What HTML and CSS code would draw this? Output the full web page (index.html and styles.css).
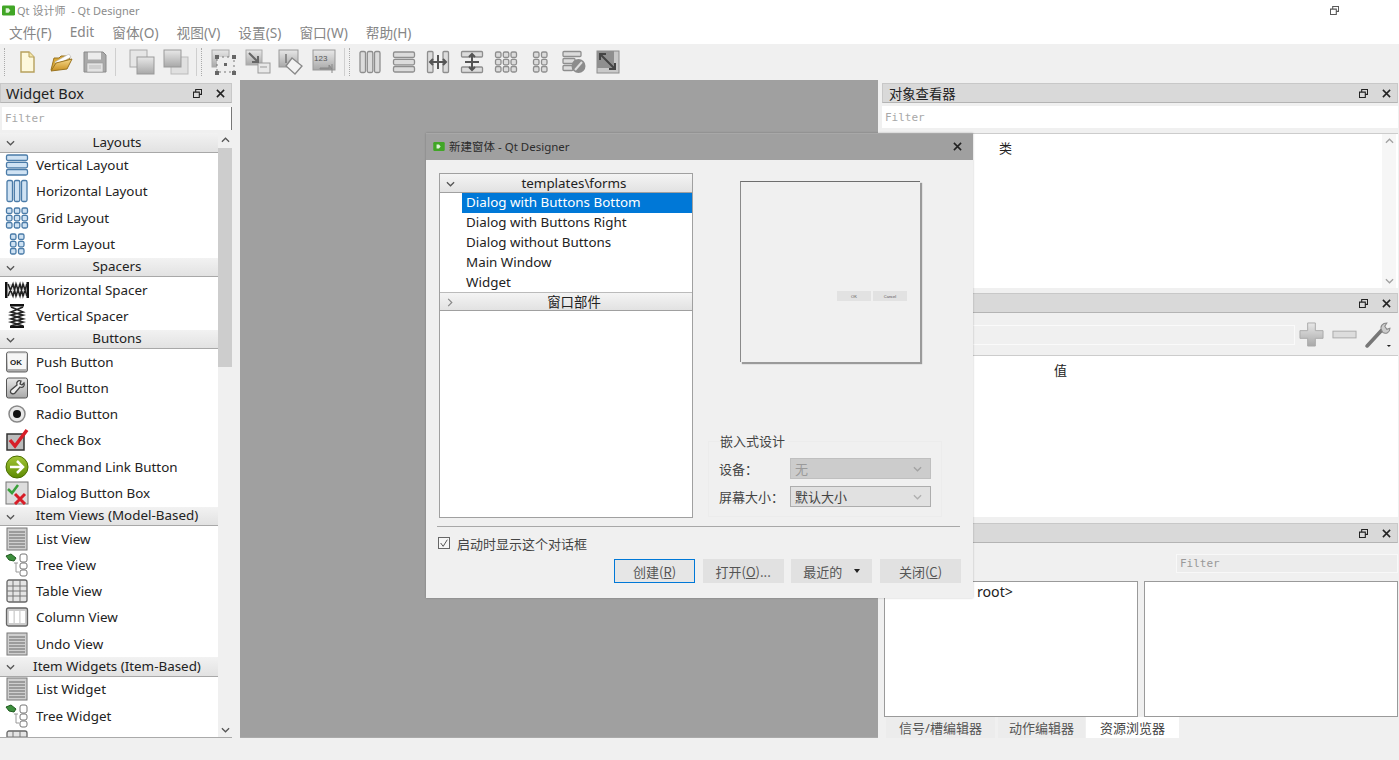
FILE: index.html
```html
<!DOCTYPE html>
<html lang="zh">
<head>
<meta charset="utf-8">
<title>Qt Designer</title>
<link rel="stylesheet" href="styles.css">
</head>
<body>
<svg class="sprite" xmlns="http://www.w3.org/2000/svg">
  <defs>
    <linearGradient id="gOrange" x1="0" y1="0" x2="0" y2="1"><stop offset="0" stop-color="#f6d98a"/><stop offset="1" stop-color="#c98f1e"/></linearGradient>
    <linearGradient id="gGray" x1="0" y1="0" x2="0" y2="1"><stop offset="0" stop-color="#e8e8e8"/><stop offset="1" stop-color="#a8a8a8"/></linearGradient>
    <linearGradient id="gGreen" x1="0" y1="0" x2="0" y2="1"><stop offset="0" stop-color="#a4c639"/><stop offset="1" stop-color="#5c8a00"/></linearGradient>
  </defs>
  <symbol id="i-new" viewBox="0 0 24 24"><path d="M6 2h8l5 5v15H6z" fill="#fdf8dc" stroke="#b6a05c" stroke-width="1.4"/><path d="M14 2v5h5" fill="#f3e6a8" stroke="#b6a05c"/></symbol>
  <symbol id="i-open" viewBox="0 0 24 24"><path d="M2 20 5 8h5l2-2h9l-1 6z" fill="#d8a93c" stroke="#9a7420"/><path d="M6 12 20 4l2 3-14 8z" fill="#fff" stroke="#bbb" stroke-width=".6"/><path d="M2 21 7 13 23 9l-5 10z" fill="url(#gOrange)" stroke="#9a7420"/></symbol>
  <symbol id="i-save" viewBox="0 0 24 24"><path d="M1 2h19l3 3v17H1z" fill="#a9a9a9" stroke="#8a8a8a"/><rect x="5" y="2.500" width="13" height="7" fill="#ececec"/><rect x="4" y="13" width="16" height="9" fill="#e3e3e3" stroke="#999" stroke-width=".6"/><path d="M6 16h12M6 18h12" stroke="#bbb"/></symbol>
  <symbol id="i-front" viewBox="0 0 26 26"><rect x="1" y="1" width="17" height="17" fill="#e6e6e6" stroke="#aaa"/><rect x="8" y="8" width="17" height="17" fill="url(#gGray)" stroke="#999"/></symbol>
  <symbol id="i-back" viewBox="0 0 26 26"><rect x="8" y="8" width="17" height="17" fill="#e0e0e0" stroke="#bbb"/><rect x="1" y="1" width="17" height="17" fill="url(#gGray)" stroke="#999"/></symbol>
  <symbol id="i-edit" viewBox="0 0 26 26"><rect x="1" y="1" width="17" height="17" fill="url(#gGray)" stroke="#aaa"/><rect x="6" y="8" width="17" height="15" fill="#eee" stroke="#777" stroke-dasharray="2 3"/><g fill="#666"><rect x="4" y="6" width="4" height="4"/><rect x="21" y="6" width="4" height="4"/><rect x="4" y="22" width="4" height="4"/><rect x="21" y="22" width="4" height="4"/><rect x="13" y="14" width="3" height="3"/></g></symbol>
  <symbol id="i-signal" viewBox="0 0 26 26"><rect x="1" y="1" width="16" height="15" fill="url(#gGray)" stroke="#aaa"/><rect x="13" y="14" width="12" height="10" fill="#e8e8e8" stroke="#999"/><path d="M15 18h7" stroke="#999"/><path d="M4 4 13 13M13 7v6H7" fill="none" stroke="#666" stroke-width="2"/></symbol>
  <symbol id="i-buddy" viewBox="0 0 26 26"><rect x="1" y="1" width="19" height="17" fill="url(#gGray)" stroke="#999"/><path d="M14 9 24 17 17 25 8 17z" fill="#f2f2f2" stroke="#888" stroke-width="1.300"/><path d="M8 5v9" stroke="#777" stroke-width="1.500"/></symbol>
  <symbol id="i-tab" viewBox="0 0 26 26"><rect x="1" y="1" width="22" height="20" fill="url(#gGray)" stroke="#999"/><path d="M8 20h12l-3-4v3h-9zM20 15v9" fill="#999" stroke="#888"/></symbol>
  <symbol id="i-h" viewBox="0 0 24 24"><g class="lay"><rect x="2" y="1.500" width="5.500" height="21" rx="1.500"/><rect x="9.300" y="1.500" width="5.500" height="21" rx="1.500"/><rect x="16.500" y="1.500" width="5.500" height="21" rx="1.500"/></g></symbol>
  <symbol id="i-v" viewBox="0 0 24 24"><g class="lay"><rect x="1.500" y="2" width="21" height="5.500" rx="1.500"/><rect x="1.500" y="9.300" width="21" height="5.500" rx="1.500"/><rect x="1.500" y="16.500" width="21" height="5.500" rx="1.500"/></g></symbol>
  <symbol id="i-sh" viewBox="0 0 24 24"><g class="lay"><rect x="1.500" y="1.500" width="5.500" height="21" rx="1"/><rect x="17" y="1.500" width="5.500" height="21" rx="1"/></g><path d="M4 12h16M7 9l-3 3 3 3M17 9l3 3-3 3M12 5v14" fill="none" stroke="#555" stroke-width="2"/></symbol>
  <symbol id="i-sv" viewBox="0 0 24 24"><g class="lay"><rect x="1.500" y="1.500" width="21" height="5.500" rx="1"/><rect x="1.500" y="17" width="21" height="5.500" rx="1"/></g><path d="M12 4v16M9 7l3-3 3 3M9 17l3 3 3-3M5 12h14" fill="none" stroke="#555" stroke-width="2"/></symbol>
  <symbol id="i-grid" viewBox="0 0 24 24"><g class="lay"><rect x="1.500" y="2" width="5.500" height="5.500" rx="1.500"/><rect x="9.300" y="2" width="5.500" height="5.500" rx="1.500"/><rect x="17" y="2" width="5.500" height="5.500" rx="1.500"/><rect x="1.500" y="9.300" width="5.500" height="5.500" rx="1.500"/><rect x="9.300" y="9.300" width="5.500" height="5.500" rx="1.500"/><rect x="17" y="9.300" width="5.500" height="5.500" rx="1.500"/><rect x="1.500" y="16.500" width="5.500" height="5.500" rx="1.500"/><rect x="9.300" y="16.500" width="5.500" height="5.500" rx="1.500"/><rect x="17" y="16.500" width="5.500" height="5.500" rx="1.500"/></g></symbol>
  <symbol id="i-form" viewBox="0 0 24 24"><g class="lay"><rect x="5.500" y="2" width="5.500" height="5.500" rx="1.500"/><rect x="13.500" y="2" width="5.500" height="5.500" rx="1.500"/><rect x="5.500" y="9.300" width="5.500" height="5.500" rx="1.500"/><rect x="13.500" y="9.300" width="5.500" height="5.500" rx="1.500"/><rect x="5.500" y="16.500" width="5.500" height="5.500" rx="1.500"/><rect x="13.500" y="16.500" width="5.500" height="5.500" rx="1.500"/></g></symbol>
  <symbol id="i-break" viewBox="0 0 24 24"><g class="lay"><rect x="1" y="1.500" width="18" height="5" rx="1"/><rect x="1" y="8.500" width="12" height="5" rx="1"/><rect x="1" y="15.500" width="10" height="5" rx="1"/></g><circle cx="16.500" cy="16" r="7" fill="#8c8c8c"/><path d="M13 20 20 12" stroke="#ddd" stroke-width="2"/></symbol>
  <symbol id="i-adjust" viewBox="0 0 24 24"><rect x="1" y="1" width="22" height="22" fill="#c9c9c9" stroke="#8c8c8c"/><rect x="1" y="1" width="17" height="17" fill="#8f8f8f"/><path d="M4 4 19 19M4 10V4h6M19 13v6h-6" fill="none" stroke="#444" stroke-width="2"/></symbol>
  <symbol id="i-hspacer" viewBox="0 0 24 24"><path d="M1 4v16M23 4v16" stroke="#111" stroke-width="3"/><path d="M3 6h18v12H3z" fill="#ddd"/><path d="M3 18 8 6l3 12 4-12 3 12 4-12M3 6l5 12 3-12 4 12 3-12 4 12" fill="none" stroke="#222" stroke-width="1.500"/></symbol>
  <symbol id="i-vspacer" viewBox="0 0 24 24"><path d="M5 1h14M5 23h14" stroke="#111" stroke-width="3"/><path d="M6 3 18 8 6 11l12 4-12 3 12 4M18 3 6 8l12 3-12 4 12 3-12 4" fill="none" stroke="#222" stroke-width="1.700"/></symbol>
  <symbol id="i-push" viewBox="0 0 24 24"><rect x="1.500" y="2" width="21" height="20" rx="2" fill="url(#gGray)" stroke="#666"/><rect x="3" y="4" width="18" height="15" fill="#f6f6f6"/></symbol>
  <symbol id="i-tool" viewBox="0 0 24 24"><rect x="1.500" y="2" width="21" height="20" rx="2" fill="url(#gGray)" stroke="#555"/><path d="M16 5c-3-1-5 1-4 4L6 14c-2 3 2 5 4 3l5-6c3 1 5-1 4-4l-2 2-2-1z" fill="#eee" stroke="#444" stroke-width="1.300"/></symbol>
  <symbol id="i-radio" viewBox="0 0 24 24"><circle cx="12" cy="12" r="8" fill="#e8e8e8" stroke="#888" stroke-width="1.500"/><circle cx="12" cy="12" r="4" fill="#111"/></symbol>
  <symbol id="i-check" viewBox="0 0 24 24"><rect x="2" y="6" width="17" height="16" fill="#bbb" stroke="#333" stroke-width="1.500"/><path d="M5 12 10 18 22 2" fill="none" stroke="#d81e28" stroke-width="3.500"/></symbol>
  <symbol id="i-cmd" viewBox="0 0 24 24"><circle cx="12" cy="12" r="11" fill="url(#gGreen)" stroke="#4a6e00"/><path d="M5 12h12M12 6l6 6-6 6" fill="none" stroke="#fff" stroke-width="2.500"/></symbol>
  <symbol id="i-dlg" viewBox="0 0 24 24"><rect x="1" y="1" width="22" height="22" fill="#ddd" stroke="#777"/><path d="M3 8 7 12 13 4" fill="none" stroke="#3aa03a" stroke-width="2.500"/><path d="M10 13 20 23M20 13 10 23" stroke="#d81e28" stroke-width="3"/></symbol>
  <symbol id="i-list" viewBox="0 0 24 24"><rect x="2" y="1" width="20" height="22" fill="#cfcfcf" stroke="#777"/><path d="M4 5h16M4 8h16M4 11h16M4 14h16M4 17h16M4 20h16" stroke="#8a8a8a" stroke-width="1.500"/></symbol>
  <symbol id="i-tree" viewBox="0 0 24 24"><path d="M1 3 6 1l5 4-2 3-5-1z" fill="#3d8f3d" stroke="#1f5a1f"/><path d="M9 10h4M11 10v9h3" fill="none" stroke="#999"/><rect x="15" y="1" width="7" height="8" rx="2" fill="#fff" stroke="#777"/><rect x="15" y="10" width="7" height="6" rx="2" fill="#fff" stroke="#777"/><rect x="15" y="17" width="7" height="6" rx="2" fill="#fff" stroke="#777"/></symbol>
  <symbol id="i-table" viewBox="0 0 24 24"><rect x="2" y="1" width="20" height="22" rx="2" fill="#e4e4e4" stroke="#666" stroke-width="1.300"/><path d="M8 1v22M15 1v22M2 7h20M2 12h20M2 17h20" stroke="#777"/></symbol>
  <symbol id="i-col" viewBox="0 0 24 24"><rect x="1.500" y="3" width="21" height="18" rx="2" fill="#ccc" stroke="#666" stroke-width="1.300"/><rect x="4" y="6" width="4.500" height="12" fill="#fff"/><rect x="9.800" y="6" width="4.500" height="12" fill="#fff"/><rect x="15.500" y="6" width="4.500" height="12" fill="#fff"/></symbol>
  <symbol id="i-float" viewBox="0 0 10 10"><path d="M3 3V.5h6.500V6H7M.5 3.500H7V9.500H.5z" fill="none" stroke="#222" stroke-width="1.200"/></symbol>
  <symbol id="i-x" viewBox="0 0 10 10"><path d="M1 1 9 9M9 1 1 9" stroke="#222" stroke-width="1.700"/></symbol>
  <symbol id="i-down" viewBox="0 0 10 6"><path d="M1 1 5 5 9 1" fill="none" stroke="#555" stroke-width="1.400"/></symbol>
  <symbol id="i-up" viewBox="0 0 10 6"><path d="M1 5 5 1 9 5" fill="none" stroke="#555" stroke-width="1.400"/></symbol>
  <symbol id="i-right" viewBox="0 0 6 10"><path d="M1 1 5 5 1 9" fill="none" stroke="#888" stroke-width="1.300"/></symbol>
  <symbol id="i-qt" viewBox="0 0 14 11"><rect width="14" height="11" rx="1.500" fill="#41a626"/><path d="M4 3h3l2 2.500L7 8H4z" fill="#dff3d8"/></symbol>
  <symbol id="i-plus" viewBox="0 0 26 26"><path d="M9 1h8v8h8v8h-8v8H9v-8H1V9h8z" fill="url(#gGray)" stroke="#aaa"/></symbol>
  <symbol id="i-minus" viewBox="0 0 26 10"><rect x="1" y="1" width="24" height="7" fill="#ddd" stroke="#aaa"/></symbol>
  <symbol id="i-wrench" viewBox="0 0 26 26"><path d="M3 24 17 9" stroke="#777" stroke-width="3.500" stroke-linecap="round"/><path d="M17 9c-2-4 1-7 5-7l-2 3 2 3 3-1c0 4-4 6-7 4z" fill="#ccc" stroke="#888"/><path d="M22 23l4 0-2 2z" fill="#222"/></symbol>
</svg>

<header class="title-bar">
  <div class="title-left"><svg class="qt-mark"><use href="#i-qt"/></svg><span>Qt 设计师&nbsp; - Qt Designer</span></div>
  <svg class="restore"><use href="#i-float"/></svg>
</header>

<nav class="menu-bar">
  <span>文件(F)</span><span>Edit</span><span>窗体(O)</span><span>视图(V)</span><span>设置(S)</span><span>窗口(W)</span><span>帮助(H)</span>
</nav>

<div class="tool-bar">
  <i class="grip"></i>
  <div class="tool-group g-file">
    <svg class="tb"><use href="#i-new"/></svg><svg class="tb"><use href="#i-open"/></svg><svg class="tb"><use href="#i-save"/></svg>
  </div>
  <i class="sep"></i>
  <div class="tool-group g-order">
    <svg class="tb"><use href="#i-front"/></svg><svg class="tb"><use href="#i-back"/></svg>
  </div>
  <i class="sep"></i><i class="grip"></i>
  <div class="tool-group g-mode">
    <svg class="tb"><use href="#i-edit"/></svg><svg class="tb"><use href="#i-signal"/></svg><svg class="tb"><use href="#i-buddy"/></svg><svg class="tb" viewBox="0 0 26 26"><use href="#i-tab"/><text x="2" y="12" class="svg-num">123</text></svg>
  </div>
  <i class="sep"></i><i class="grip"></i>
  <div class="tool-group g-layout gray">
    <svg class="tb"><use href="#i-h"/></svg><svg class="tb"><use href="#i-v"/></svg><svg class="tb"><use href="#i-sh"/></svg><svg class="tb"><use href="#i-sv"/></svg><svg class="tb"><use href="#i-grid"/></svg><svg class="tb"><use href="#i-form"/></svg><svg class="tb"><use href="#i-break"/></svg><svg class="tb"><use href="#i-adjust"/></svg>
  </div>
</div>

<main class="workspace">
  <aside class="left-dock">
    <div class="dock-title"><span>Widget Box</span><span class="dock-btns"><svg class="db"><use href="#i-float"/></svg><svg class="db"><use href="#i-x"/></svg></span></div>
    <div class="filter filter-left">Filter</div>
    <div class="box-wrap">
      <div class="box-tree blue">
        <div class="cat"><svg class="chev"><use href="#i-down"/></svg>Layouts</div>
        <div class="item"><svg class="wi"><use href="#i-v"/></svg>Vertical Layout</div>
        <div class="item"><svg class="wi"><use href="#i-h"/></svg>Horizontal Layout</div>
        <div class="item"><svg class="wi"><use href="#i-grid"/></svg>Grid Layout</div>
        <div class="item"><svg class="wi"><use href="#i-form"/></svg>Form Layout</div>
        <div class="cat"><svg class="chev"><use href="#i-down"/></svg>Spacers</div>
        <div class="item"><svg class="wi"><use href="#i-hspacer"/></svg>Horizontal Spacer</div>
        <div class="item"><svg class="wi"><use href="#i-vspacer"/></svg>Vertical Spacer</div>
        <div class="cat"><svg class="chev"><use href="#i-down"/></svg>Buttons</div>
        <div class="item"><svg class="wi" viewBox="0 0 24 24"><use href="#i-push"/><text x="5" y="15" class="svg-ok">OK</text></svg>Push Button</div>
        <div class="item"><svg class="wi"><use href="#i-tool"/></svg>Tool Button</div>
        <div class="item"><svg class="wi"><use href="#i-radio"/></svg>Radio Button</div>
        <div class="item"><svg class="wi"><use href="#i-check"/></svg>Check Box</div>
        <div class="item"><svg class="wi"><use href="#i-cmd"/></svg>Command Link Button</div>
        <div class="item"><svg class="wi"><use href="#i-dlg"/></svg>Dialog Button Box</div>
        <div class="cat"><svg class="chev"><use href="#i-down"/></svg>Item Views (Model-Based)</div>
        <div class="item"><svg class="wi"><use href="#i-list"/></svg>List View</div>
        <div class="item"><svg class="wi"><use href="#i-tree"/></svg>Tree View</div>
        <div class="item"><svg class="wi"><use href="#i-table"/></svg>Table View</div>
        <div class="item"><svg class="wi"><use href="#i-col"/></svg>Column View</div>
        <div class="item"><svg class="wi"><use href="#i-list"/></svg>Undo View</div>
        <div class="cat"><svg class="chev"><use href="#i-down"/></svg>Item Widgets (Item-Based)</div>
        <div class="item"><svg class="wi"><use href="#i-list"/></svg>List Widget</div>
        <div class="item"><svg class="wi"><use href="#i-tree"/></svg>Tree Widget</div>
        <div class="item"><svg class="wi"><use href="#i-table"/></svg></div>
      </div>
      <div class="vscroll">
        <svg class="arrow"><use href="#i-up"/></svg>
        <div class="track"><div class="thumb"></div></div>
        <svg class="arrow"><use href="#i-down"/></svg>
      </div>
    </div>
  </aside>

  <section class="central"></section>

  <aside class="right-dock">
    <div class="dock dock-object">
      <div class="dock-title"><span class="cjk">对象查看器</span><span class="dock-btns"><svg class="db"><use href="#i-float"/></svg><svg class="db"><use href="#i-x"/></svg></span></div>
      <div class="filter filter-right">Filter</div>
      <div class="obj-table">
        <div class="table-body"><span class="head-cell class-head">类</span></div>
        <div class="vscroll light">
          <svg class="arrow"><use href="#i-up"/></svg>
          <div class="track"></div>
          <svg class="arrow"><use href="#i-down"/></svg>
        </div>
      </div>
    </div>
    <div class="dock dock-prop">
      <div class="dock-title dock-title-end"><span class="dock-btns"><svg class="db"><use href="#i-float"/></svg><svg class="db"><use href="#i-x"/></svg></span></div>
      <div class="prop-tools">
        <div class="prop-input"></div>
        <svg class="pt-plus"><use href="#i-plus"/></svg>
        <svg class="pt-minus"><use href="#i-minus"/></svg>
        <svg class="pt-wrench"><use href="#i-wrench"/></svg>
      </div>
      <div class="prop-table"><span class="head-cell value-head">值</span></div>
    </div>
    <div class="dock dock-res">
      <div class="dock-title dock-title-end"><span class="dock-btns"><svg class="db"><use href="#i-float"/></svg><svg class="db"><use href="#i-x"/></svg></span></div>
      <div class="res-filter-row"><div class="res-filter">Filter</div></div>
      <div class="res-panes">
        <div class="pane pane-left">&lt;resource root&gt;</div>
        <div class="pane pane-right"></div>
      </div>
      <div class="tabs">
        <span class="tab t1">信号/槽编辑器</span><span class="tab t2">动作编辑器</span><span class="tab t3 active">资源浏览器</span>
      </div>
    </div>
  </aside>
</main>

<footer class="status-bar"></footer>

<div class="dialog">
  <div class="dlg-title">
    <div class="title-left"><svg class="qt-mark dlg-mark"><use href="#i-qt"/></svg><span>新建窗体 - Qt Designer</span></div>
    <svg class="dlg-close"><use href="#i-x"/></svg>
  </div>
  <div class="dlg-body">
    <div class="dlg-upper">
      <div class="tpl-tree">
        <div class="tpl-cat"><svg class="chev"><use href="#i-down"/></svg>templates\forms</div>
        <div class="tpl-item selected"><span>Dialog with Buttons Bottom</span></div>
        <div class="tpl-item"><span>Dialog with Buttons Right</span></div>
        <div class="tpl-item"><span>Dialog without Buttons</span></div>
        <div class="tpl-item"><span>Main Window</span></div>
        <div class="tpl-item"><span>Widget</span></div>
        <div class="tpl-cat closed"><svg class="chev-r"><use href="#i-right"/></svg>窗口部件</div>
      </div>
      <div class="dlg-side">
        <div class="preview">
          <div class="preview-btns"><span>OK</span><span>Cancel</span></div>
        </div>
        <div class="embed">
          <span class="embed-title">嵌入式设计</span>
          <div class="embed-row"><label>设备：</label><div class="combo disabled"><span>无</span><svg class="combo-chev"><use href="#i-down"/></svg></div></div>
          <div class="embed-row"><label>屏幕大小：</label><div class="combo"><span>默认大小</span><svg class="combo-chev"><use href="#i-down"/></svg></div></div>
        </div>
      </div>
    </div>
    <hr class="dlg-sep">
    <div class="show-row"><span class="check"><svg viewBox="0 0 12 12"><path d="M2 6 5 10 10 2" fill="none" stroke="#555" stroke-width="1.200"/></svg></span><span>启动时显示这个对话框</span></div>
    <div class="dlg-buttons">
      <button class="btn default">创建(<u>R</u>)</button>
      <button class="btn">打开(<u>O</u>)...</button>
      <button class="btn">最近的<i class="caret"></i></button>
      <button class="btn">关闭(<u>C</u>)</button>
    </div>
  </div>
</div>
</body>
</html>
```

FILE: styles.css
```css
* { box-sizing: border-box; }

html, body {
  margin: 0;
  width: 1399px;
  height: 760px;
  overflow: hidden;
}

body {
  position: relative;
  background: #f0f0f0;
  color: #222;
  font-family: "Noto Sans", "Noto Sans CJK SC", sans-serif;
  font-size: 13.400px;
  display: flex;
  flex-direction: column;
}

.sprite { position: absolute; width: 0; height: 0; }
svg { display: block; flex: none; }

.lay rect { fill: var(--f); stroke: var(--c); stroke-width: 1.300; }
.gray { --c: #8e8e8e; --f: #dcdcdc; }
.blue { --c: #4a7ba8; --f: #cfe2f3; }
.svg-num { font: 8px "Liberation Sans", sans-serif; fill: #555; }
.svg-ok { font: bold 8px "Liberation Sans", sans-serif; fill: #222; }

/* window chrome */
.title-bar {
  height: 20px;
  flex: none;
  background: #fff;
  display: flex;
  align-items: center;
  justify-content: space-between;
  padding: 0 60px 0 2px;
  color: #8c8c8c;
  font-size: 11px;
}
.title-left { display: flex; align-items: center; gap: 2px; }
.qt-mark { width: 13px; height: 11px; }
.restore { width: 9px; height: 9px; opacity: .75; }

.menu-bar {
  height: 24px;
  flex: none;
  background: #fff;
  display: flex;
  align-items: center;
  gap: 18px;
  padding: 0 0 1px 9px;
  color: #868686;
  font-size: 13.700px;
}

.tool-bar {
  height: 36px;
  flex: none;
  display: flex;
  align-items: center;
  background: #f0f0f0;
  position: relative;
}
.tool-group { display: flex; align-items: center; gap: 9px; }
.tb { width: 24px; height: 24px; }
.grip { width: 1px; height: 28px; margin-left: 4px; border-left: 1px dotted #aaa; }
.sep { width: 1px; height: 28px; background: #cfcfcf; }
.g-file { margin-left: 10px; margin-right: 7px; }
.g-file .tb { margin-right: 1px; }
.g-order { margin: 0 6px 0 13px; }
.g-order .tb { width: 26px; height: 26px; margin-right: 1px; }
.g-order .tb + .tb { margin-left: -2px; }
.g-mode { margin: 0 6px 0 9px; gap: 7.500px; }
.g-mode .tb { width: 26px; height: 26px; }
.g-layout { margin-left: 8px; gap: 10px; }

.workspace { flex: 1; min-height: 0; display: flex; }

/* docks */
.dock-title {
  height: 20px;
  flex: none;
  margin-top: 3px;
  background: #d9d9d9;
  border: 1px solid #c8c8c8;
  border-bottom-color: #b4b4b4;
  display: flex;
  align-items: center;
  justify-content: space-between;
  padding-left: 5px;
  color: #222;
  font-size: 14.500px;
}
.dock-title-end { justify-content: flex-end; }
.cjk { font-size: 13.300px; padding-left: 1px; }
.dock-btns { display: flex; align-items: center; gap: 14px; padding-right: 6px; }
.db { width: 9px; height: 9px; }

.filter {
  font: 11px "DejaVu Sans Mono", monospace;
  color: #a8a8a8;
  background: #fff;
  display: flex;
  align-items: center;
  padding-left: 3px;
  flex: none;
}

.left-dock {
  width: 240px;
  flex: none;
  display: flex;
  flex-direction: column;
  padding-right: 8px;
}
.filter-left {
  height: 23px;
  margin: 4px 0 3px 2px;
  border-right: 1px solid #777;
}
.box-wrap { flex: 1; min-height: 0; display: flex; background: #fff; border-bottom: 1px solid #aaa; }
.box-tree { width: 218px; flex: none; overflow: hidden; }
.cat {
  height: 19.500px;
  position: relative;
  display: flex;
  align-items: center;
  justify-content: center;
  padding-left: 16px;
  padding-bottom: 1px;
  background: linear-gradient(#f2f2f2, #e2e2e2);
  border-bottom: 1px solid #a8a8a8;
  white-space: nowrap;
}
.chev { position: absolute; left: 6px; top: 7px; width: 9px; height: 6px; }
.item {
  height: 26.250px;
  display: flex;
  align-items: center;
  gap: 7px;
  padding: 0 0 1px 5px;
  white-space: nowrap;
}
.wi { width: 24px; height: 24px; }

.vscroll {
  width: 14px;
  flex: none;
  background: #f0f0f0;
  display: flex;
  flex-direction: column;
  align-items: center;
  padding: 4px 0;
}
.arrow { width: 9px; height: 6px; flex: none; }
.track { flex: 1; width: 100%; margin: 5px 0; }
.thumb { height: 219px; background: #cdcdcd; }
.light { opacity: .55; }

.central { width: 638px; flex: none; background: #a0a0a0; border-bottom: 1px solid #aaa; }

.right-dock {
  flex: 1;
  min-width: 0;
  padding-left: 4px;
  padding-right: 1px;
  display: flex;
  flex-direction: column;
}
.dock { display: flex; flex-direction: column; flex: none; }

.dock-object { height: 210px; }
.filter-right { height: 22px; margin-top: 3px; padding-left: 3px; }
.obj-table { margin-top: 5px; height: 155px; display: flex; background: #fff; border-top: 1px solid #ccc; }
.table-body { flex: 1; position: relative; }
.head-cell { position: absolute; font-size: 13px; color: #222; }
.class-head { left: 117px; top: 4px; }
.obj-table .vscroll { width: 14px; margin-right: 2px; }

.dock-prop { height: 230px; }
.prop-tools { height: 42px; flex: none; display: flex; align-items: center; padding-top: 1px; }
.prop-input { width: 413px; height: 20px; background: #f0f0f0; border: 1px solid #fafafa; flex: none; }
.pt-plus { width: 25px; height: 25px; margin-left: 4px; }
.pt-minus { width: 25px; height: 10px; margin-left: 8px; }
.pt-wrench { width: 27px; height: 27px; margin-left: 7px; }
.prop-table { height: 162px; background: #fff; position: relative; border-top: 1px solid #ccc; }
.value-head { left: 172px; top: 4px; }

.dock-res { flex: 1; min-height: 0; }
.res-filter-row { height: 38px; flex: none; display: flex; justify-content: flex-end; align-items: flex-end; padding-bottom: 8px; }
.res-filter {
  width: 222px;
  height: 19px;
  display: flex;
  align-items: center;
  padding-left: 3px;
  background: #ececec;
  border: 1px solid #f8f8f8;
  font: 11px "DejaVu Sans Mono", monospace;
  color: #999;
}
.res-panes { height: 136px; flex: none; display: flex; gap: 6px; padding-left: 2px; }
.pane { background: #fff; border: 1px solid #9a9a9a; }
.pane-left { width: 254px; padding-left: 21px; line-height: 19px; font-size: 14.200px; word-spacing: 1px; white-space: nowrap; }
.pane-right { flex: 1; }
.tabs { height: 21px; flex: none; display: flex; padding-left: 4px; color: #555; font-size: 13px; }
.tab { display: flex; align-items: center; justify-content: center; background: #ececec; }
.t1 { width: 109px; }
.t2 { width: 87px; margin-left: 3px; }
.t3 { width: 93px; margin-left: 1px; }
.tab.active { background: #fff; color: #444; }

.status-bar { height: 22px; flex: none; background: #f0f0f0; }

/* modal dialog */
.dialog {
  position: absolute;
  left: 426px;
  top: 133px;
  width: 547px;
  height: 465px;
  background: #f0f0f0;
  box-shadow: 0 0 2px rgba(0, 0, 0, .25);
  display: flex;
  flex-direction: column;
}
.dlg-title {
  height: 27px;
  flex: none;
  background: #a0a0a0;
  border-top: 1px solid #a8a8a8;
  display: flex;
  align-items: center;
  justify-content: space-between;
  padding: 0 11px 2px 7px;
  font-size: 11.500px;
  color: #2c2c2c;
}
.dlg-mark { margin-right: 2px; width: 12px; height: 9px; }
.dlg-close { width: 9px; height: 9px; }
.dlg-body { flex: 1; display: flex; flex-direction: column; padding: 13px 12px 0 13px; }
.dlg-upper { height: 345px; flex: none; display: flex; }
.tpl-tree { width: 254px; flex: none; background: #fff; border: 1px solid #a0a0a0; }
.tpl-cat {
  height: 19px;
  position: relative;
  display: flex;
  align-items: center;
  justify-content: center;
  padding-left: 16px;
  background: linear-gradient(#f4f4f4, #e2e2e2);
  border-bottom: 1px solid #a0a0a0;
}
.tpl-cat.closed { border-top: 1px solid #bbb; padding-bottom: 2px; }
.chev-r { position: absolute; left: 7px; top: 5px; width: 6px; height: 9px; }
.tpl-item { height: 19.900px; padding-left: 22px; }
.tpl-item span { display: block; height: 100%; padding-left: 4px; line-height: 18.500px; white-space: nowrap; }
.tpl-item.selected span { background: #0078d7; color: #fff; line-height: 19.500px; }

.dlg-side { flex: 1; display: flex; flex-direction: column; }
.preview {
  width: 180px;
  height: 181px;
  margin: 8px 0 0 47px;
  flex: none;
  background: #f0f0f0;
  border-top: 1px solid #6e6e6e;
  border-left: 1px solid #8a8a8a;
  box-shadow: 2px 2px 1px #9a9a9a;
  display: flex;
  align-items: flex-start;
  justify-content: flex-end;
  padding: 109px 13px 0 0;
}
.preview-btns { display: flex; gap: 2px; }
.preview-btns span {
  width: 34px;
  height: 10px;
  background: #e2e2e2;
  font: 4px "Liberation Sans", sans-serif;
  color: #555;
  display: flex;
  align-items: center;
  justify-content: center;
}
.embed {
  position: relative;
  width: 234px;
  height: 76px;
  margin: 79px 0 0 15px;
  border: 1px solid #ececec;
  padding: 16px 10px 0 10px;
  color: #444;
  font-size: 13px;
}
.embed-title { position: absolute; left: 11px; top: -9px; background: #f0f0f0; padding-right: 3px; line-height: 16px; }
.embed-row { display: flex; align-items: center; height: 21px; margin-bottom: 7px; }
.embed-row label { width: 71px; flex: none; white-space: nowrap; }
.combo {
  width: 141px;
  height: 21px;
  background: #e1e1e1;
  border: 1px solid #adadad;
  display: flex;
  align-items: center;
  justify-content: space-between;
  padding: 0 8px 0 4px;
}
.combo.disabled { background: #cccccc; border-color: #bfbfbf; color: #9a9a9a; }
.combo-chev { width: 9px; height: 6px; opacity: .35; }

.dlg-sep { margin: 8px 0 0 -2px; width: 523px; border: 0; height: 1px; background: #a8a8a8; }
.show-row { display: flex; align-items: center; gap: 7px; height: 16px; margin: 8px 0 0 -1px; color: #444; font-size: 13px; }
.check { width: 12px; height: 12px; border: 1px solid #666; background: #f6f6f6; display: block; }
.check svg { width: 10px; height: 10px; }

.dlg-buttons { display: flex; justify-content: flex-end; gap: 7.670px; margin: 8px 0 0; }
.btn {
  width: 81px;
  height: 24px;
  padding: 0;
  background: #e1e1e1;
  border: 1px solid #e1e1e1;
  color: #555;
  font: 13px "Noto Sans CJK SC", sans-serif;
  display: flex;
  align-items: center;
  justify-content: center;
}
.btn.default { border-color: #0078d7; background: #e6e6e6; }
.caret { width: 0; height: 0; margin-left: 12px; border: 3.500px solid transparent; border-top: 4px solid #222; border-bottom: 0; }
```
